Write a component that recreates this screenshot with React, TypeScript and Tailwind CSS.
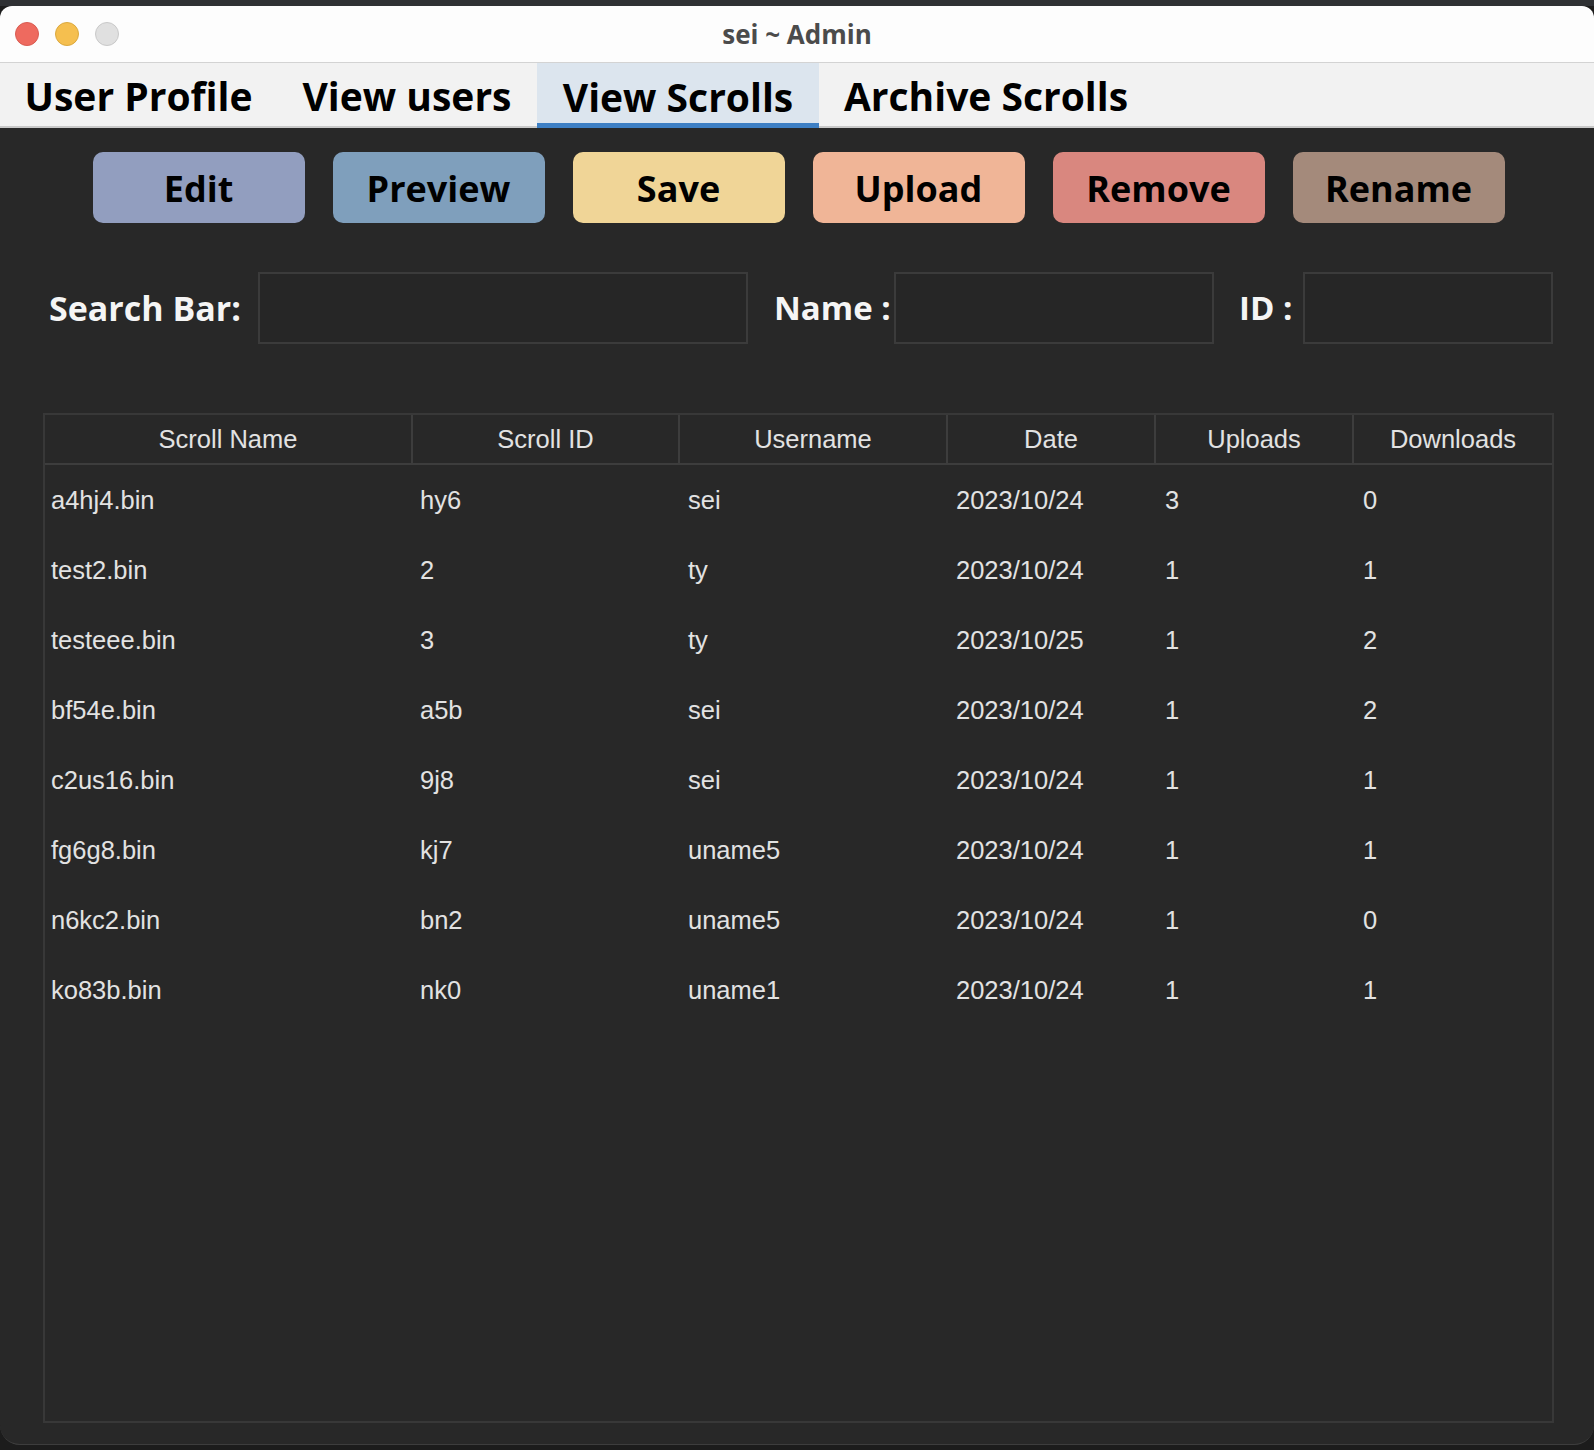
import React from 'react';

type Row = {
    name: string;
    id: string;
    user: string;
    date: string;
    uploads: number;
    downloads: number;
};

const rows: Row[] = [
    { name: 'a4hj4.bin', id: 'hy6', user: 'sei', date: '2023/10/24', uploads: 3, downloads: 0 },
    { name: 'test2.bin', id: '2', user: 'ty', date: '2023/10/24', uploads: 1, downloads: 1 },
    { name: 'testeee.bin', id: '3', user: 'ty', date: '2023/10/25', uploads: 1, downloads: 2 },
    { name: 'bf54e.bin', id: 'a5b', user: 'sei', date: '2023/10/24', uploads: 1, downloads: 2 },
    { name: 'c2us16.bin', id: '9j8', user: 'sei', date: '2023/10/24', uploads: 1, downloads: 1 },
    { name: 'fg6g8.bin', id: 'kj7', user: 'uname5', date: '2023/10/24', uploads: 1, downloads: 1 },
    { name: 'n6kc2.bin', id: 'bn2', user: 'uname5', date: '2023/10/24', uploads: 1, downloads: 0 },
    { name: 'ko83b.bin', id: 'nk0', user: 'uname1', date: '2023/10/24', uploads: 1, downloads: 1 },
];

const tabs = [
    { label: 'User Profile', width: 'w-[277px]', active: false },
    { label: 'View users', width: 'w-[260px]', active: false },
    { label: 'View Scrolls', width: 'w-[282px]', active: true },
    { label: 'Archive Scrolls', width: 'w-[334px]', active: false },
];

const buttons = [
    { label: 'Edit', color: 'bg-[#929ebf]' },
    { label: 'Preview', color: 'bg-[#7f9fbc]' },
    { label: 'Save', color: 'bg-[#f0d597]' },
    { label: 'Upload', color: 'bg-[#f0b597]' },
    { label: 'Remove', color: 'bg-[#d9877f]' },
    { label: 'Rename', color: 'bg-[#a48a7b]' },
];

// column widths follow the header dividers
const columns = [
    { label: 'Scroll Name', width: 'w-[368px]' },
    { label: 'Scroll ID', width: 'w-[267px]' },
    { label: 'Username', width: 'w-[268px]' },
    { label: 'Date', width: 'w-[208px]' },
    { label: 'Uploads', width: 'w-[198px]' },
    { label: 'Downloads', width: 'flex-1' },
];

const uiFont = "font-['Open_Sans',_'Noto_Sans',_sans-serif]";
const tableFont = "font-['Liberation_Sans',_Arial,_sans-serif]";

const App: React.FC = () => {
    return (
        <div className="w-[1594px] h-[1450px] overflow-hidden bg-[#1c1c1c]">
            {/* desktop strip above the window */}
            <div className="h-[6px] bg-[#2f3134]" />

            <div className="h-[1439px] flex flex-col rounded-t-[12px] rounded-b-[20px] overflow-hidden bg-[#282828] border-b border-[#3d3d3d]">
                {/* Title bar */}
                <div className="h-[57px] shrink-0 grid grid-cols-[1fr_auto_1fr] items-center bg-[#fdfdfd] border-b border-[#d3d3d3]">
                    <div className="flex items-center gap-[16px] pl-[15px]">
                        <span className="w-[24px] h-[24px] rounded-full bg-[#ee6a5f] border border-[#d95c52]" />
                        <span className="w-[24px] h-[24px] rounded-full bg-[#f5bf4f] border border-[#dba93f]" />
                        <span className="w-[24px] h-[24px] rounded-full bg-[#e0e0e0] border border-[#c9c9c9]" />
                    </div>
                    <span className={`${uiFont} font-bold text-[26px] text-[#4b4b4b] leading-none`}>sei ~ Admin</span>
                    <div />
                </div>

                {/* Tabs */}
                <div className="h-[65px] shrink-0 flex items-stretch bg-[#f2f2f2] border-b-2 border-[#c9c9c9]">
                    {tabs.map((tab) => (
                        <div
                            key={tab.label}
                            className={`${tab.width} flex items-center justify-center pt-[2px] ${uiFont} font-bold text-[39px] text-black leading-none ${
                                tab.active ? 'bg-[#dce5ee] shadow-[inset_0_-5px_0_#3d7fc4] -mb-[2px]' : ''
                            }`}
                        >
                            {tab.label}
                        </div>
                    ))}
                </div>

                {/* Content */}
                <div className="flex-1 flex flex-col pt-[24px]">
                    {/* Action buttons */}
                    <div className="flex justify-center gap-[28px] pl-[3px]">
                        {buttons.map((b) => (
                            <button
                                key={b.label}
                                className={`w-[212px] h-[71px] pt-[3px] rounded-[10px] ${b.color} ${uiFont} font-bold text-[36px] text-black leading-none`}
                            >
                                {b.label}
                            </button>
                        ))}
                    </div>

                    {/* Search row */}
                    <div className={`flex items-center mt-[49px] pl-[49px] ${uiFont} font-bold text-[33px] text-[#f5f5f5]`}>
                        <span className="w-[209px] text-[34px]">Search Bar:</span>
                        <input className="w-[490px] h-[72px] bg-[#262626] border-2 border-[#3b3b3b] outline-none" />
                        <span className="w-[146px] pl-[26px]">Name :</span>
                        <input className="w-[320px] h-[72px] bg-[#262626] border-2 border-[#3b3b3b] outline-none" />
                        <span className="w-[89px] pl-[25px]">ID :</span>
                        <input className="w-[250px] h-[72px] bg-[#262626] border-2 border-[#3b3b3b] outline-none" />
                    </div>

                    {/* Scroll table */}
                    <div className={`mt-[69px] ml-[43px] w-[1511px] h-[1010px] border-2 border-[#383838] ${tableFont} text-[25.5px] text-[#e2e2e2]`}>
                        <div className="h-[50px] flex border-b-2 border-[#3d3d3d]">
                            {columns.map((c, i) => (
                                <div
                                    key={c.label}
                                    className={`${c.width} flex items-center justify-center ${
                                        i < columns.length - 1 ? 'border-r-2 border-[#3d3d3d]' : ''
                                    }`}
                                >
                                    {c.label}
                                </div>
                            ))}
                        </div>
                        {rows.map((r) => (
                            <div key={r.name} className="h-[70px] flex items-center">
                                <div className="w-[368px] pl-[6px]">{r.name}</div>
                                <div className="w-[267px] pl-[7px]">{r.id}</div>
                                <div className="w-[268px] pl-[8px]">{r.user}</div>
                                <div className="w-[208px] pl-[8px]">{r.date}</div>
                                <div className="w-[198px] pl-[9px]">{r.uploads}</div>
                                <div className="flex-1 pl-[9px]">{r.downloads}</div>
                            </div>
                        ))}
                    </div>
                </div>
            </div>
        </div>
    );
};

export default App;
